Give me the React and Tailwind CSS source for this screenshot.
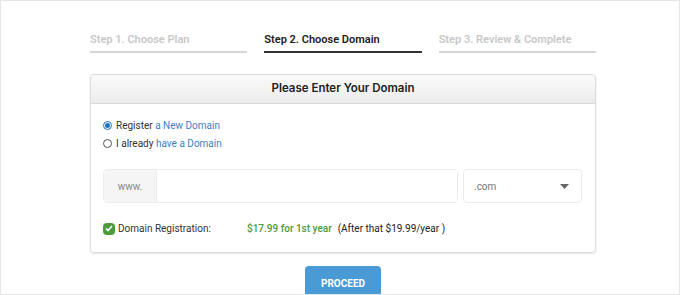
export default function App() {
  const steps = [
    { label: "Step 1. Choose Plan", active: false },
    { label: "Step 2. Choose Domain", active: true },
    { label: "Step 3. Review & Complete", active: false },
  ];

  return (
    <div className="w-[680px] h-[295px] overflow-hidden bg-white border border-[#e6e6e6] font-['Roboto',sans-serif]">
      <div className="ml-[89px] w-[506px] pt-[31px]">
        <div className="flex gap-[17px]">
          {steps.map((s) => (
            <div
              key={s.label}
              className={`flex-1 pb-[3px] text-[11px] leading-[16px] font-semibold border-b-2 ${
                s.active ? "text-[#222] border-[#333]" : "text-[#c8c8c8] border-[#d6d6d6]"
              }`}
            >
              {s.label}
            </div>
          ))}
        </div>

        <div className="mt-[21px] rounded border border-[#dcdcdc] shadow-[0_1px_2px_rgba(0,0,0,0.12)]">
          <div className="h-[29px] flex items-center justify-center bg-gradient-to-b from-[#fafafa] to-[#ececec] border-b border-[#dadada] rounded-t">
            <span className="text-[11.5px] font-semibold text-[#222] font-['Inter',sans-serif]">Please Enter Your Domain</span>
          </div>

          <div className="pl-[12px] pr-[13px] pt-[14px] pb-[16px] text-[10px] leading-[15px]">
            <label className="flex items-center gap-[4px] text-[#333]">
              <span className="w-[9px] h-[9px] rounded-full border border-[#1e73be] flex items-center justify-center bg-white">
                <span className="w-[5px] h-[5px] rounded-full bg-[#1e73be]" />
              </span>
              <span>
                Register <span className="text-[#3a7fc4]">a New Domain</span>
              </span>
            </label>
            <label className="mt-[3px] flex items-center gap-[4px] text-[#333]">
              <span className="w-[9px] h-[9px] rounded-full border border-[#555] bg-white" />
              <span>
                I already <span className="text-[#3a7fc4]">have a Domain</span>
              </span>
            </label>

            <div className="mt-[18px] flex gap-[5px]">
              <div className="flex-1 flex h-[34px] border border-[#ececec] rounded-sm">
                <div className="w-[53px] flex items-center justify-center bg-[#f5f5f5] border-r border-[#ececec] text-[#888]">
                  www.
                </div>
                <div className="flex-1 bg-white" />
              </div>
              <div className="w-[119px] h-[34px] border border-[#ececec] rounded-sm flex items-center justify-between pl-[10px] pr-[12px] text-[#777]">
                .com
                <svg width="9" height="5" viewBox="0 0 9 5">
                  <path d="M0 0h9L4.5 5z" fill="#666" />
                </svg>
              </div>
            </div>

            <div className="mt-[18px] flex items-center text-[#333]">
              <span className="w-[12px] h-[12px] rounded-sm bg-[#4c9a3c] flex items-center justify-center">
                <svg width="8" height="7" viewBox="0 0 8 7">
                  <path d="M1 3.5l2 2L7 1" stroke="#fff" strokeWidth="1.6" fill="none" />
                </svg>
              </span>
              <span className="ml-[3px] w-[129px]">Domain Registration:</span>
              <span className="font-medium text-[#4c9a3c]">$17.99 for 1st year</span>
              <span className="ml-[6px] text-[#222]">(After that $19.99/year )</span>
            </div>
          </div>
        </div>

        <div className="mt-[13px] flex justify-center">
          <button className="w-[76px] h-[34px] rounded-t-sm bg-[#4a9ad6] text-white text-[10px] font-bold">
            PROCEED
          </button>
        </div>
      </div>
    </div>
  );
}
